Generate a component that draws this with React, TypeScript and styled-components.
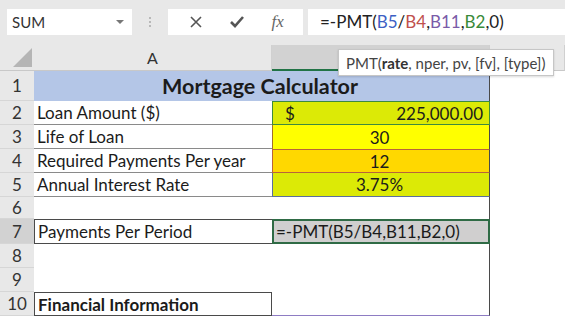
import React, { FC } from "react";
import styled, { createGlobalStyle } from "styled-components";

const GlobalStyle = createGlobalStyle`
  html, body {
    margin: 0;
    padding: 0;
    background: #ffffff;
  }
  body {
    font-family: Lato, "Open Sans", sans-serif;
    color: #1b1b1b;
  }
`;

const Page = styled.div`
  position: relative;
  width: 565px;
  height: 317px;
  overflow: hidden;
  background: #ffffff;
`;

const Toolbar = styled.div`
  display: flex;
  align-items: center;
  height: 45px;
  padding: 0 0 2px 7px;
  box-sizing: border-box;
  background: #e8e8e8;
`;

const NameBox = styled.div`
  display: flex;
  align-items: center;
  justify-content: space-between;
  width: 125px;
  height: 26px;
  padding: 0 8px 0 5px;
  box-sizing: border-box;
  background: #ffffff;
  font-size: 15px;
  color: #333;
`;

const Caret = styled.span`
  width: 0;
  height: 0;
  border-left: 4px solid transparent;
  border-right: 4px solid transparent;
  border-top: 4px solid #777;
`;

const Grip = styled.div`
  display: flex;
  flex-direction: column;
  gap: 2px;
  margin: 0 17px 0 17px;
  span {
    width: 2px;
    height: 2px;
    background: #b8b8b8;
  }
`;

const ButtonBox = styled.div`
  display: flex;
  align-items: center;
  justify-content: space-around;
  width: 135px;
  height: 26px;
  padding: 0 6px 0 8px;
  box-sizing: border-box;
  background: #ffffff;
  color: #555;
`;

const FxLabel = styled.span`
  font-family: "Liberation Serif", serif;
  font-style: italic;
  font-size: 17px;
  color: #666;
`;

const FormulaBox = styled.div`
  flex: 1;
  height: 26px;
  margin-left: 5px;
  padding-left: 12px;
  display: flex;
  align-items: center;
  background: #ffffff;
  font-size: 17px;
  color: #222;
`;

const Ref = styled.span<{ $color: string }>`
  color: ${(p) => p.$color};
`;

const Sheet = styled.div`
  display: grid;
  grid-template-columns: 34px 238px 218px 1fr;
  grid-template-rows: 26px 30px 24px 24px 24px 24px 22px 25px 24px 24px 24px;
`;

const Corner = styled.div`
  position: relative;
  background: #e8e8e8;
  border-bottom: 1px solid #c8c8c8;
  &::after {
    content: "";
    position: absolute;
    right: 2px;
    bottom: 3px;
    border-left: 19px solid transparent;
    border-bottom: 19px solid #b5b5b5;
  }
`;

const ColHead = styled.div<{ $active?: boolean }>`
  display: flex;
  align-items: center;
  justify-content: center;
  background: ${(p) => (p.$active ? "#d2d2d2" : "#e8e8e8")};
  border-bottom: ${(p) => (p.$active ? "2px solid #217346" : "1px solid #c8c8c8")};
  border-right: 1px solid #d0d0d0;
  font-size: 16px;
  color: #333;
`;

const RowHead = styled.div<{ $active?: boolean }>`
  display: flex;
  align-items: center;
  justify-content: center;
  background: ${(p) => (p.$active ? "#d2d2d2" : "#e8e8e8")};
  border-bottom: 1px solid #d6d6d6;
  font-size: 17px;
  color: #333;
`;

type CellProps = {
  $bg?: string;
  $align?: "left" | "center" | "right" | "split";
  $bold?: boolean;
  $size?: number;
  $span?: number;
  $top?: string;
  $bottom?: string;
  $left?: string;
  $right?: string;
};

const Cell = styled.div<CellProps>`
  display: flex;
  align-items: center;
  justify-content: ${(p) =>
    p.$align === "center"
      ? "center"
      : p.$align === "right"
      ? "flex-end"
      : p.$align === "split"
      ? "space-between"
      : "flex-start"};
  grid-column: span ${(p) => p.$span ?? 1};
  padding: 0 6px 0 ${(p) => (p.$align === "split" ? 12 : 3)}px;
  box-sizing: border-box;
  background: ${(p) => p.$bg ?? "transparent"};
  font-size: ${(p) => p.$size ?? 17}px;
  font-weight: ${(p) => (p.$bold ? 700 : 400)};
  white-space: nowrap;
  border-top: ${(p) => (p.$top ? `1px solid ${p.$top}` : "none")};
  border-bottom: ${(p) => (p.$bottom ? `1px solid ${p.$bottom}` : "none")};
  border-left: ${(p) => (p.$left ? `1px solid ${p.$left}` : "none")};
  border-right: ${(p) => (p.$right ? `1px solid ${p.$right}` : "none")};
`;

const ActiveCell = styled(Cell)`
  border: 2px solid #2f6b45;
  padding-left: 2px;
`;

const Tooltip = styled.div`
  position: absolute;
  left: 338px;
  top: 49px;
  height: 25px;
  padding: 0 8px 0 7px;
  display: flex;
  align-items: center;
  background: #ffffff;
  border: 1px solid #c6c6c6;
  box-shadow: 0 1px 2px rgba(0, 0, 0, 0.15);
  font-size: 15px;
  color: #444;
  b {
    font-weight: 700;
    color: #333;
  }
`;

const line = "#8a8a8a";
const edge = "#4a4a4a";

const App: FC = () => {
  return (
    <Page>
      <GlobalStyle />
      <Toolbar>
        <NameBox>
          SUM
          <Caret />
        </NameBox>
        <Grip>
          <span />
          <span />
          <span />
        </Grip>
        <ButtonBox>
          <svg width="14" height="14" viewBox="0 0 14 14">
            <path d="M2 2 L12 12 M12 2 L2 12" stroke="#555" strokeWidth="1.6" />
          </svg>
          <svg width="16" height="14" viewBox="0 0 16 14">
            <path d="M2 7 L6 11 L14 2" stroke="#555" strokeWidth="2.6" fill="none" />
          </svg>
          <FxLabel>fx</FxLabel>
        </ButtonBox>
        <FormulaBox>
          =-PMT(<Ref $color="#3d5fc4">B5</Ref>/<Ref $color="#c0504d">B4</Ref>,
          <Ref $color="#7a5ba8">B11</Ref>,<Ref $color="#3a8a3a">B2</Ref>,0)
        </FormulaBox>
      </Toolbar>

      <Sheet>
        <Corner />
        <ColHead>A</ColHead>
        <ColHead $active />
        <ColHead />

        <RowHead>1</RowHead>
        <Cell $span={2} $align="center" $bg="#b4c6e7" $bold $size={21.5} $right={edge}>
          Mortgage Calculator
        </Cell>
        <Cell />

        <RowHead>2</RowHead>
        <Cell $bottom={line}>Loan Amount ($)</Cell>
        <Cell $align="split" $bg="#dcea06" $top="#3e8a3e" $bottom="#3e8a3e" $left="#3e8a3e" $right="#3e8a3e">
          <span>$</span>
          <span>225,000.00</span>
        </Cell>
        <Cell />

        <RowHead>3</RowHead>
        <Cell $bottom={line}>Life of Loan</Cell>
        <Cell $align="center" $bg="#ffff00" $left="#a0702a" $right={edge}>
          30
        </Cell>
        <Cell />

        <RowHead>4</RowHead>
        <Cell $bottom={line}>Required Payments Per year</Cell>
        <Cell $align="center" $bg="#ffd800" $top="#b8643a" $bottom="#b8643a" $left="#b8643a" $right={edge}>
          12
        </Cell>
        <Cell />

        <RowHead>5</RowHead>
        <Cell $bottom={line}>Annual Interest Rate</Cell>
        <Cell $align="center" $bg="#dcea06" $bottom="#5b6f9e" $left="#5b6f9e" $right={edge}>
          3.75%
        </Cell>
        <Cell />

        <RowHead>6</RowHead>
        <Cell />
        <Cell $right={edge} />
        <Cell />

        <RowHead $active>7</RowHead>
        <Cell $top={edge} $bottom={edge} $left={edge}>
          Payments Per Period
        </Cell>
        <ActiveCell $bg="#d0cfcf">=-PMT(B5/B4,B11,B2,0)</ActiveCell>
        <Cell />

        <RowHead>8</RowHead>
        <Cell />
        <Cell $right={edge} />
        <Cell />

        <RowHead>9</RowHead>
        <Cell />
        <Cell $right={edge} />
        <Cell />

        <RowHead>10</RowHead>
        <Cell $bold $top={edge} $bottom={edge} $left={edge} $right={edge}>
          Financial Information
        </Cell>
        <Cell $right={edge} $bottom="#8e7cc3" />
        <Cell />
      </Sheet>

      <Tooltip>
        PMT(<b>rate</b>, nper, pv, [fv], [type])
      </Tooltip>
    </Page>
  );
};

export default App;
